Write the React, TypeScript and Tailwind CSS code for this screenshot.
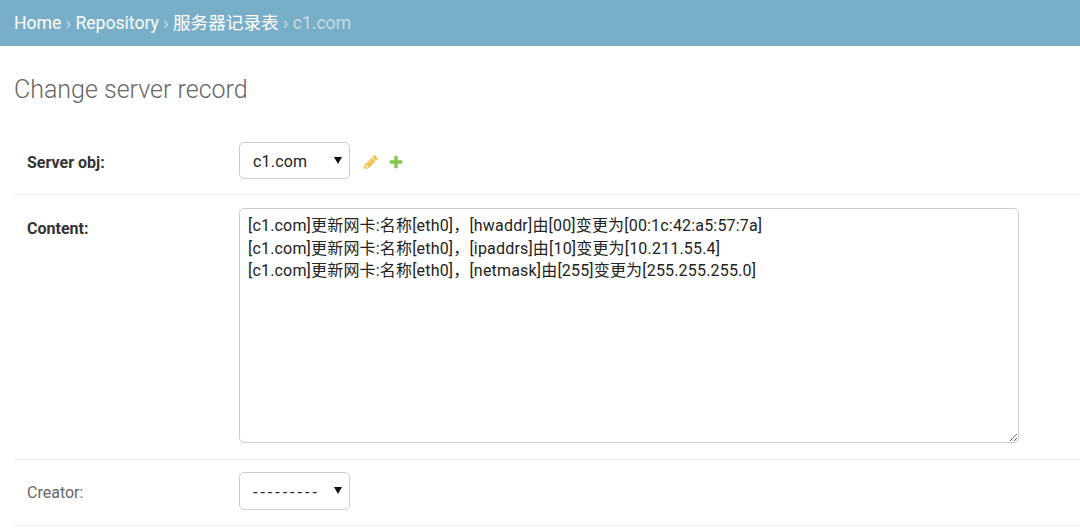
import React from 'react';

const font = "font-['Roboto','Noto_Sans_CJK_SC',sans-serif]";

const PencilIcon = () => (
  <svg width="16" height="16" viewBox="0 0 1792 1792" className="shrink-0">
    <path
      fill="#f2c14e"
      d="M491 1536l91-91-235-235-91 91v107h128v128h107zm523-928q0-22-22-22-10 0-17 7l-542 542q-7 7-7 17 0 22 22 22 10 0 17-7l542-542q7-7 7-17zm-54-192l416 416-832 832h-416v-416zm683 96q0 53-37 90l-166 166-416-416 166-165q36-38 90-38 53 0 91 38l235 234q37 39 37 91z"
    />
  </svg>
);

const PlusIcon = () => (
  <svg width="16" height="16" viewBox="0 0 1792 1792" className="shrink-0">
    <path
      fill="#82c84a"
      d="M1600 796v192q0 40-28 68t-68 28h-416v416q0 40-28 68t-68 28h-192q-40 0-68-28t-28-68v-416h-416q-40 0-68-28t-28-68v-192q0-40 28-68t68-28h416v-416q0-40 28-68t68-28h192q40 0 68 28t28 68v416h416q40 0 68 28t28 68z"
    />
  </svg>
);

const Sep = () => <span className="mx-[4.4px] text-[#c4dce8]">›</span>;

const Select = ({ label, height, wide }: { label: string; height: string; wide?: boolean }) => (
  <div className="relative w-[111px]">
    <select
      className={
        "block w-full appearance-none rounded-[5px] border border-[#ccc] bg-white pt-[4px] pl-[13px] text-[16px] text-[#222] " +
        height +
        (wide ? " tracking-[3px]" : " tracking-[0.2px]") +
        " " +
        font
      }
      defaultValue="a"
    >
      <option value="a">{label}</option>
    </select>
    {/* native arrow drawn over the select */}
    <svg width="8" height="7" viewBox="0 0 8 7" className="absolute top-[15px] right-[8px]">
      <path d="M0 0h8L4 7z" fill="#111" />
    </svg>
  </div>
);

const content = `[c1.com]更新网卡:名称[eth0]，[hwaddr]由[00]变更为[00:1c:42:a5:57:7a]
[c1.com]更新网卡:名称[eth0]，[ipaddrs]由[10]变更为[10.211.55.4]
[c1.com]更新网卡:名称[eth0]，[netmask]由[255]变更为[255.255.255.0]`;

export default function App() {
  return (
    <div className={"h-[530px] w-[1080px] overflow-hidden bg-white " + font}>
      <div className="flex h-[46px] items-center bg-[#79aec8] px-[14px] pt-[1px] text-[17.6px] text-white">
        <span>Home</span>
        <Sep />
        <span>Repository</span>
        <Sep />
        <span>服务器记录表</span>
        <Sep />
        <span className="text-[#c4dce8]">c1.com</span>
      </div>

      <div className="pl-[14px]">
        <h1 className="pt-[28px] text-[25px] leading-[32px] font-light text-[#666]">Change server record</h1>

        <div className="mt-[19px] flex h-[70px] items-center border-b border-[#eee] pt-[1px]">
          <label className="w-[225px] pt-[6px] pl-[13px] text-[16px] font-bold text-[#333]">Server obj:</label>
          <Select label="c1.com" height="h-[37px]" />
          <div className="ml-[13px] flex items-center gap-[9px] pt-[4px]">
            <PencilIcon />
            <PlusIcon />
          </div>
        </div>

        <div className="flex h-[265px] border-b border-[#eee] pt-[13px]">
          <label className="w-[225px] pt-[12px] pl-[13px] text-[16px] leading-[18px] font-bold text-[#333]">Content:</label>
          <textarea
            className="h-[235px] w-[780px] rounded-[5px] border border-[#ccc] px-[8px] py-[6px] text-[16px] leading-[22.5px] tracking-[0.18px] text-[#222]"
            defaultValue={content}
          />
        </div>

        <div className="flex h-[66px] items-start border-b border-[#eee] pt-[12px]">
          <label className="w-[225px] pt-[9px] pl-[13px] text-[16px] text-[#666]">Creator:</label>
          <Select label="---------" height="h-[38px]" wide />
        </div>
      </div>
    </div>
  );
}
